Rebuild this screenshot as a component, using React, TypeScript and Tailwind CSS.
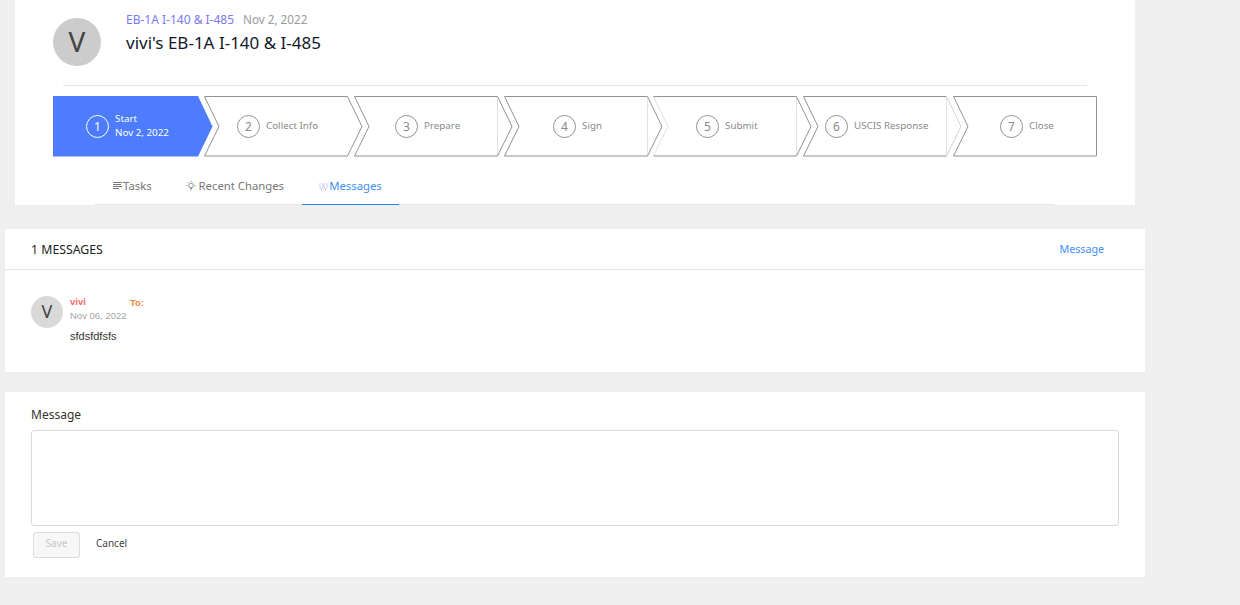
function Step({ n, label, sub, first, last, noLine, notch = "#929292", tip = "#929292", textX }: { n: number; label: string; sub?: string; first?: boolean; last?: boolean; noLine?: boolean; notch?: string; tip?: string; textX: number }) {
  return (
    <div className="relative h-[61px] w-[150px] shrink-0">
      {first ? (
        <svg className="absolute left-0 top-0" width="160" height="61"><path d="M0 0H145L159.500 30.500L145 60.500H0Z" fill="#4d7cfe" /></svg>
      ) : (
        <svg className="absolute left-0 top-0" width="160" height="61" fill="none">
          <path d="M.5.500L15 30.500L.5 60" stroke={notch} />
          <path d="M.5.500H143.500M.5 60H143.500" stroke="#929292" />
          {last ? <path d="M143.500.500V60" stroke="#929292" /> : <>{!noLine && <path d="M143.500.500V60" stroke="#e2e2e2" />}<path d="M143.500.500L158 30.500L143.500 60" stroke={tip} /></>}
        </svg>
      )}
      <div className={`relative flex h-full items-center gap-[6px] ${first ? "text-white" : "text-[#8a8a8a]"}`} style={{ paddingLeft: textX }}>
        <span className={`flex h-[23px] w-[23px] items-center justify-center rounded-full border text-[12px] ${first ? "border-white" : "border-[#929292]"}`}>{n}</span>
        <span className={`text-[9.800px] leading-[14px] whitespace-nowrap ${first ? "pb-[1px]" : "pb-[2px]"}`}>{label}{sub && <><br />{sub}</>}</span>
      </div>
    </div>
  );
}

export default function App() {
  return (
    <div className="min-h-[605px] overflow-hidden bg-[#efefef] font-['Noto_Sans','Liberation_Sans',sans-serif]">
      <div className="ml-[15px] h-[205px] w-[1120px] bg-white">
        <div className="flex h-[85px] pl-[38px] pt-[18px]">
          <div className="flex h-12 w-12 items-center justify-center rounded-full bg-[#cccccc] pb-[3px] text-[28px] text-[#444]">V</div>
          <div className="ml-[25px] -mt-[7px]">
            <div className="text-[12px] leading-[14px] pt-[1px]"><span className="text-[#7a78f0]">EB-1A I-140 &amp; I-485</span><span className="ml-[9px] text-[11.700px] text-[#9a9a9a]">Nov 2, 2022</span></div>
            <div className="mt-[5px] text-[17px] leading-[22px] text-[#111827]">vivi's EB-1A I-140 &amp; I-485</div>
          </div>
        </div>
        <div className="ml-[48px] mb-[10px] h-px w-[1024px] bg-[#e6e6e6]" />
        <div className="ml-[38px] flex">
          <Step n={1} label="Start" sub="Nov 2, 2022" first textX={33} />
          <div className="ml-px flex">
            <Step n={2} label="Collect Info" noLine textX={33} />
            <Step n={3} label="Prepare" textX={41} />
            <Step n={4} label="Sign" textX={49} />
            <div className="-ml-px"><Step n={5} label="Submit" notch="#e2e2e2" textX={43} /></div>
            <Step n={6} label="USCIS Response" tip="#d4d4d4" textX={22} />
            <Step n={7} label="Close" last textX={47} />
          </div>
        </div>
        <div className="ml-[80px] mt-[14px] flex h-[34px] w-[960px] border-b border-[#e6e6e6] pl-[18px] text-[11.300px] text-[#777]">
          <div className="flex h-[33px] items-center gap-px pb-[3px]">
            <svg width="9" height="8" viewBox="0 0 9 8" stroke="#777"><path d="M0 .5H9M0 2.500H8M0 4.500H9M0 6.500H6" /></svg>Tasks
          </div>
          <div className="ml-[34px] flex h-[33px] items-center gap-[3px] pb-[3px]">
            <svg width="10" height="10" viewBox="0 0 10 10" fill="none" stroke="#777" strokeWidth=".8"><circle cx="5" cy="4.500" r="2.300" /><path d="M4 7.500H6M4.300 9H5.700M5 0V1M.5 4.500H1.500M8.500 4.500H9.500M1.800 1.300L2.500 2M8.200 1.300L7.500 2" /></svg>Recent Changes
          </div>
          <div className="ml-[18px] flex h-[34px] w-[97px] items-center justify-center gap-px border-b border-[#2b85e4] pb-[3px] text-[#3d8ef5]">
            <svg width="9" height="9" viewBox="0 0 9 9" fill="none" stroke="#c5b8f5" strokeWidth=".8"><path d="M1 1V5A1.500 1.500 0 0 0 4 5V1M5 1V5A1.500 1.500 0 0 0 8 5V1M2.500 7V9M6.500 7V9" /></svg>Messages
          </div>
        </div>
      </div>

      <div className="ml-[5px] mt-[24px] h-[143px] w-[1140px] bg-white">
        <div className="flex h-[41px] items-center justify-between border-b border-[#e8e8e8] pl-[26px] pr-[41px] pt-[1px]">
          <span className="pt-[1px] text-[12.300px] text-[#222]">1 MESSAGES</span>
          <span className="text-[10.700px] text-[#3d8ef5]">Message</span>
        </div>
        <div className="flex pl-[26px] pt-[26px] font-['Liberation_Sans',sans-serif]">
          <div className="flex h-8 w-8 items-center justify-center rounded-full bg-[#d9d9d9] pb-[2px] font-['Noto_Sans',sans-serif] text-[18px] text-[#444]">V</div>
          <div className="ml-[7px]">
            <div className="flex h-[12px] items-center text-[9.500px] font-bold leading-none"><span className="w-[60px] text-[#f56c6c]">vivi</span><span className="pt-[1px] text-[#f0843c]">To:</span></div>
            <div className="mt-[1px] text-[9.500px] leading-[13px] text-[#a3a3a3]">Nov 06, 2022</div>
            <div className="mt-[7px] text-[11px] leading-[14px] text-[#333]">sfdsfdfsfs</div>
          </div>
        </div>
      </div>

      <div className="ml-[5px] mt-[20px] h-[185px] w-[1140px] bg-white pl-[26px] pr-[26px] pt-[14px]">
        <div className="text-[12px] leading-[18px] text-[#333]">Message</div>
        <div className="mt-[6px] h-[96px] rounded-[3px] border border-[#d9d9d9]" />
        <div className="mt-[6px] flex h-[26px] items-center pl-[2px]">
          <div className="flex h-[26px] w-[47px] items-center justify-center rounded-[3px] border border-[#dcdcdc] bg-[#f7f7f7] pb-[3px] text-[10px] text-[#c5c8ce]">Save</div>
          <span className="ml-[16px] pb-[3px] text-[10px] text-[#444]">Cancel</span>
        </div>
      </div>
    </div>
  );
}
